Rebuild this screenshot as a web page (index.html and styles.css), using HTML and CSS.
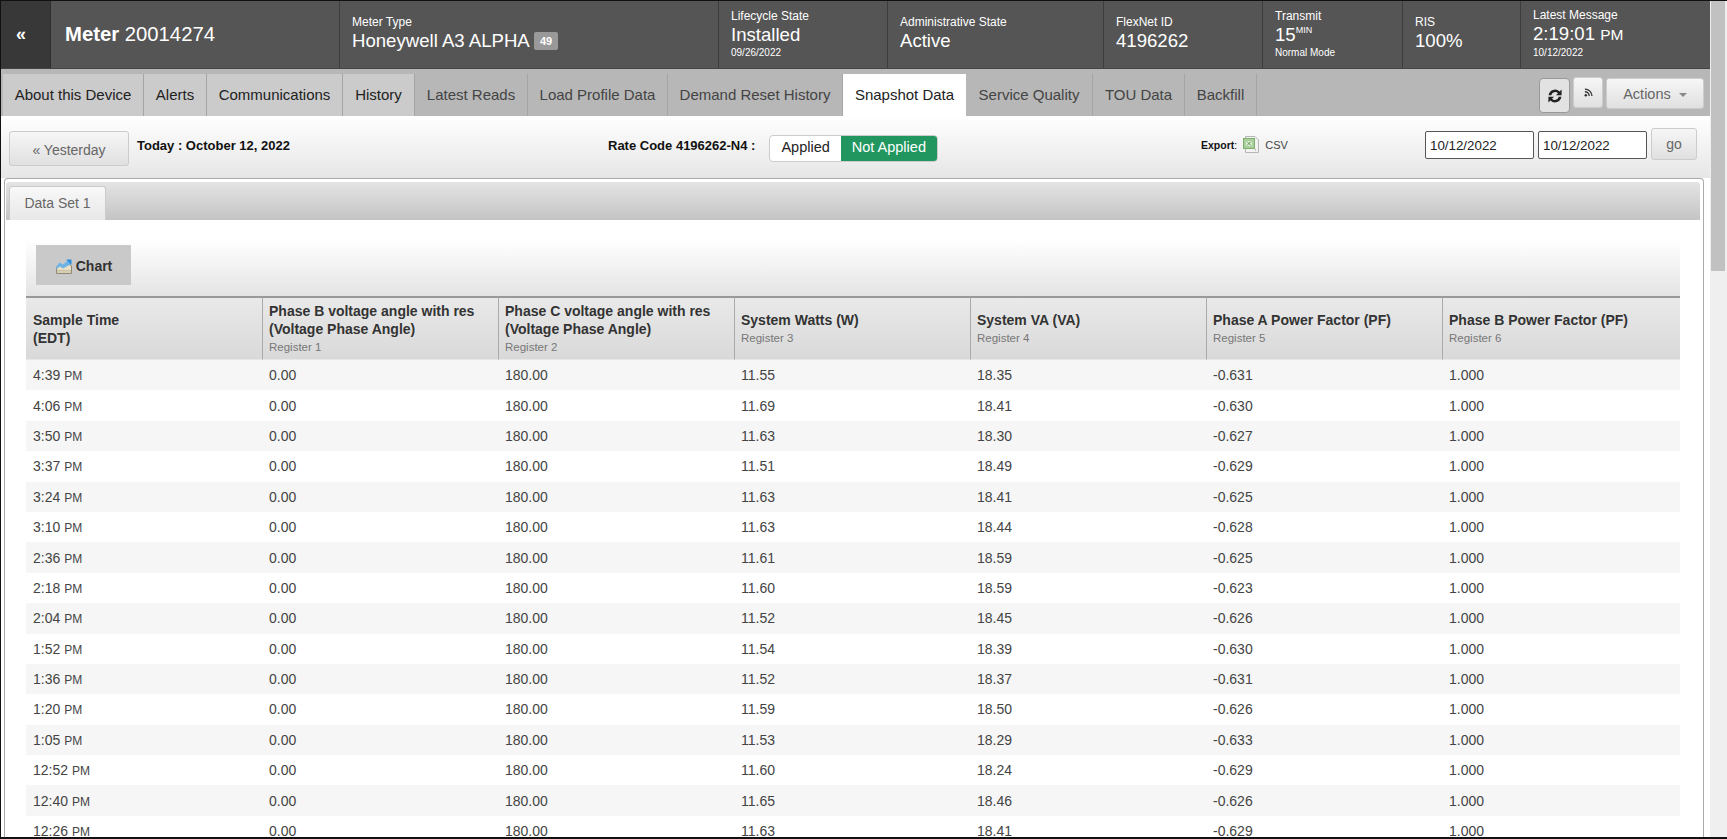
FILE: index.html
```html
<!DOCTYPE html>
<html lang="en">
<head>
    <meta charset="UTF-8">
    <meta name="viewport" content="width=device-width, initial-scale=1.0">
    <title>Meter 20014274 - Snapshot Data</title>
    <link rel="stylesheet" href="styles.css">
</head>
<body>
    <div class="window">
        <div class="page">
            <header class="meter-bar">
                <a class="collapse">«</a>
                <div class="meter-name"><b>Meter</b> 20014274</div>
                <div class="stat stat-short stat-type"><span class="stat-label">Meter Type</span><span class="stat-value">Honeywell A3 ALPHA <em class="badge">49</em></span></div>
                <div class="stat stat-life"><span class="stat-label">Lifecycle State</span><span class="stat-value">Installed</span><span class="stat-note">09/26/2022</span></div>
                <div class="stat stat-short stat-admin"><span class="stat-label">Administrative State</span><span class="stat-value">Active</span></div>
                <div class="stat stat-short stat-flex"><span class="stat-label">FlexNet ID</span><span class="stat-value">4196262</span></div>
                <div class="stat stat-transmit"><span class="stat-label">Transmit</span><span class="stat-value">15<sup>MIN</sup></span><span class="stat-note">Normal Mode</span></div>
                <div class="stat stat-short stat-ris"><span class="stat-label">RIS</span><span class="stat-value">100%</span></div>
                <div class="stat stat-latest"><span class="stat-label">Latest Message</span><span class="stat-value">2:19:01 <small>PM</small></span><span class="stat-note">10/12/2022</span></div>
            </header>

            <nav class="tabs">
                <a class="tab tab-light w141">About this Device</a>
                <a class="tab tab-light w63">Alerts</a>
                <a class="tab tab-light w136">Communications</a>
                <a class="tab tab-light w72">History</a>
                <a class="tab w113">Latest Reads</a>
                <a class="tab w140">Load Profile Data</a>
                <a class="tab w175">Demand Reset History</a>
                <a class="tab tab-active w123">Snapshot Data</a>
                <a class="tab w127">Service Quality</a>
                <a class="tab w92">TOU Data</a>
                <a class="tab w72">Backfill</a>
                <div class="tab-actions">
                    <button class="icon-btn refresh-btn">
                        <svg width="16" height="16" viewBox="0 0 16 16"><path d="M1.6 7.2A6.5 6.5 0 0 1 12.6 3.4L14.6 1.6V7.2H9L11 5.2A4 4 0 0 0 4.3 7.2Z" fill="#222"/><path d="M14.4 8.8A6.5 6.5 0 0 1 3.4 12.6L1.4 14.4V8.8H7L5 10.8A4 4 0 0 0 11.7 8.8Z" fill="#222"/></svg>
                    </button>
                    <button class="icon-btn rss-btn">
                        <svg width="9" height="9" viewBox="0 0 10 10"><circle cx="2" cy="8" r="1.4" fill="#333"/><path d="M1 4.2A4.8 4.8 0 0 1 5.8 9M1 1.2A7.8 7.8 0 0 1 8.8 9" fill="none" stroke="#333" stroke-width="1.5"/></svg>
                    </button>
                    <button class="actions-btn">Actions <i class="caret"></i></button>
                </div>
            </nav>

            <section class="toolbar">
                <button class="day-btn">« Yesterday</button>
                <div class="today">Today : October 12, 2022</div>
                <div class="rate">
                    <span class="rate-label">Rate Code 4196262-N4 :</span>
                    <div class="toggle"><span class="toggle-off">Applied</span><span class="toggle-on">Not Applied</span></div>
                </div>
                <div class="export">
                    <span><b>Export</b>:</span>
                    <svg width="16" height="17" viewBox="0 0 16 17"><path d="M2.5 .5H12L15.5 4V16.5H2.5Z" fill="#f3f3f3" stroke="#b5b5b5"/><rect x=".5" y="2.5" width="11" height="10" fill="#a9d09c" stroke="#7dae6d"/><rect x="3" y="5" width="6" height="5" fill="#dcecd6"/><path d="M4 5.5L8 9.5M8 5.5L4 9.5" stroke="#5f9a4c"/><path d="M12.5 13.5V14.5" stroke="#888"/></svg>
                    <a>CSV</a>
                </div>
                <div class="dates">
                    <input class="date-input" value="10/12/2022">
                    <input class="date-input" value="10/12/2022">
                    <button class="go-btn">go</button>
                </div>
            </section>

            <section class="panel">
                <div class="panel-tabs"><a class="panel-tab">Data Set 1</a></div>
                <div class="panel-body">
                    <div class="chart-bar">
                        <button class="chart-btn">
                            <svg width="16" height="15" viewBox="0 0 16 15"><path d="M.5 8.5L4 6L7 8L11 4L15.5 7V14.5H.5Z" fill="#e8dfc6" stroke="#8f8a76"/><path d="M1 11.5H15M1 13H15" stroke="#c9bfa3"/><path d="M.5 7L4 3.5L7 5.5L12 1.5L15 5L7 9.5L4 7.5L.5 10Z" fill="#6fb2e6"/><path d="M10 .5H15.5V6Z" fill="#2f8fdc"/></svg>
                            Chart
                        </button>
                    </div>
                    <table class="data-table">
                        <thead>
                            <tr>
                                <th>Sample Time<br>(EDT)</th>
                                <th>Phase B voltage angle with res<br>(Voltage Phase Angle)<span class="reg">Register 1</span></th>
                                <th>Phase C voltage angle with res<br>(Voltage Phase Angle)<span class="reg">Register 2</span></th>
                                <th>System Watts (W)<span class="reg">Register 3</span></th>
                                <th>System VA (VA)<span class="reg">Register 4</span></th>
                                <th>Phase A Power Factor (PF)<span class="reg">Register 5</span></th>
                                <th class="col-last">Phase B Power Factor (PF)<span class="reg">Register 6</span></th>
                            </tr>
                        </thead>
                        <tbody>
                            <tr><td>4:39 <small>PM</small></td><td>0.00</td><td>180.00</td><td>11.55</td><td>18.35</td><td>-0.631</td><td>1.000</td></tr>
                            <tr><td>4:06 <small>PM</small></td><td>0.00</td><td>180.00</td><td>11.69</td><td>18.41</td><td>-0.630</td><td>1.000</td></tr>
                            <tr><td>3:50 <small>PM</small></td><td>0.00</td><td>180.00</td><td>11.63</td><td>18.30</td><td>-0.627</td><td>1.000</td></tr>
                            <tr><td>3:37 <small>PM</small></td><td>0.00</td><td>180.00</td><td>11.51</td><td>18.49</td><td>-0.629</td><td>1.000</td></tr>
                            <tr><td>3:24 <small>PM</small></td><td>0.00</td><td>180.00</td><td>11.63</td><td>18.41</td><td>-0.625</td><td>1.000</td></tr>
                            <tr><td>3:10 <small>PM</small></td><td>0.00</td><td>180.00</td><td>11.63</td><td>18.44</td><td>-0.628</td><td>1.000</td></tr>
                            <tr><td>2:36 <small>PM</small></td><td>0.00</td><td>180.00</td><td>11.61</td><td>18.59</td><td>-0.625</td><td>1.000</td></tr>
                            <tr><td>2:18 <small>PM</small></td><td>0.00</td><td>180.00</td><td>11.60</td><td>18.59</td><td>-0.623</td><td>1.000</td></tr>
                            <tr><td>2:04 <small>PM</small></td><td>0.00</td><td>180.00</td><td>11.52</td><td>18.45</td><td>-0.626</td><td>1.000</td></tr>
                            <tr><td>1:52 <small>PM</small></td><td>0.00</td><td>180.00</td><td>11.54</td><td>18.39</td><td>-0.630</td><td>1.000</td></tr>
                            <tr><td>1:36 <small>PM</small></td><td>0.00</td><td>180.00</td><td>11.52</td><td>18.37</td><td>-0.631</td><td>1.000</td></tr>
                            <tr><td>1:20 <small>PM</small></td><td>0.00</td><td>180.00</td><td>11.59</td><td>18.50</td><td>-0.626</td><td>1.000</td></tr>
                            <tr><td>1:05 <small>PM</small></td><td>0.00</td><td>180.00</td><td>11.53</td><td>18.29</td><td>-0.633</td><td>1.000</td></tr>
                            <tr><td>12:52 <small>PM</small></td><td>0.00</td><td>180.00</td><td>11.60</td><td>18.24</td><td>-0.629</td><td>1.000</td></tr>
                            <tr><td>12:40 <small>PM</small></td><td>0.00</td><td>180.00</td><td>11.65</td><td>18.46</td><td>-0.626</td><td>1.000</td></tr>
                            <tr><td>12:26 <small>PM</small></td><td>0.00</td><td>180.00</td><td>11.63</td><td>18.41</td><td>-0.629</td><td>1.000</td></tr>
                        </tbody>
                    </table>
                </div>
            </section>
        </div>
        <div class="scrollbar"><div class="scroll-thumb"></div></div>
    </div>
</body>
</html>
```

FILE: styles.css
```css
html, body {
    height: 100%;
    margin: 0;
    overflow: hidden;
}
body {
    font-family: "Liberation Sans", Arial, sans-serif;
    font-size: 14px;
    color: #333;
    background: #fff;
}
button, input {
    font-family: inherit;
}
.window {
    display: flex;
    height: 839px;
    box-sizing: border-box;
    border: 1px solid #111;
    border-right: 0;
    border-bottom-width: 2px;
    overflow: hidden;
}
.page {
    width: 1709px;
    flex: none;
    overflow: hidden;
}
.scrollbar {
    flex: 1;
    background: #efefef;
}
.scroll-thumb {
    height: 270px;
    margin: 0 2px 0 1px;
    background: #c1c1c1;
}

/* header */
.meter-bar {
    display: flex;
    height: 67px;
    background: #555;
    color: #fff;
    border-bottom: 1px solid #444;
}
.collapse {
    width: 50px;
    flex: none;
    box-sizing: border-box;
    background: #383838;
    border-right: 1px solid #2e2e2e;
    font-size: 18px;
    font-weight: bold;
    line-height: 66px;
    padding-left: 15px;
}
.meter-name {
    width: 289px;
    flex: none;
    box-sizing: border-box;
    padding-left: 14px;
    font-size: 20.3px;
    line-height: 66px;
    border-right: 1px solid #3d3d3d;
}
.stat {
    display: flex;
    flex-direction: column;
    justify-content: center;
    flex: none;
    box-sizing: border-box;
    padding: 0 0 1px 12px;
    border-right: 1px solid #3d3d3d;
}
.stat-short {
    padding-bottom: 2px;
}
.stat-type { width: 379px; }
.stat-life { width: 169px; }
.stat-admin { width: 216px; }
.stat-flex { width: 159px; }
.stat-transmit { width: 140px; }
.stat-ris { width: 118px; }
.stat-latest { flex: 1; border-right: 0; }
.stat-label {
    font-size: 12px;
    line-height: 15px;
}
.stat-value {
    font-size: 18.6px;
    line-height: 22px;
}
.stat-value small {
    font-size: 15.5px;
}
.stat-value sup {
    font-size: 9px;
    vertical-align: 8px;
    line-height: 0;
}
.stat-note {
    font-size: 10px;
    line-height: 14px;
}
.badge {
    display: inline-block;
    font-style: normal;
    font-size: 11px;
    font-weight: bold;
    line-height: 18px;
    padding: 0 6px;
    background: #999;
    border-radius: 2px;
    vertical-align: 2px;
}

/* tabs */
.tabs {
    display: flex;
    height: 47px;
    box-sizing: border-box;
    padding: 5px 0 0 2px;
    background: #b7b7b7;
}
.tab {
    box-sizing: border-box;
    height: 42px;
    font-size: 15px;
    line-height: 42px;
    text-align: center;
    color: #444;
    border-right: 1px solid #a5a5a5;
}
.tab-light {
    background: #cbcbcb;
    color: #222;
}
.tab-active {
    background: #fff;
    color: #222;
    border-right: 0;
}
.w141 { width: 141px; }
.w140 { width: 140px; }
.w63 { width: 63px; }
.w136 { width: 136px; }
.w72 { width: 72px; }
.w113 { width: 113px; }
.w175 { width: 175px; }
.w123 { width: 123px; }
.w127 { width: 127px; }
.w92 { width: 92px; }
.tab-actions {
    display: flex;
    gap: 3px;
    margin-left: auto;
    padding: 3px 6px 0 0;
    align-items: flex-start;
}
.icon-btn, .actions-btn, .day-btn, .go-btn {
    border: 1px solid #ccc;
    border-radius: 3px;
    background: linear-gradient(#f6f6f6, #e0e0e0);
    color: #666;
    padding: 0;
}
.icon-btn {
    display: flex;
    align-items: center;
    justify-content: center;
}
.refresh-btn {
    width: 31px;
    height: 35px;
    margin-top: 1px;
    border-color: #999;
    border-radius: 4px;
    background: #e2e2e2;
}
.rss-btn {
    width: 30px;
    height: 31px;
}
.actions-btn {
    width: 98px;
    height: 31px;
    margin-top: 1px;
    font-size: 14.5px;
}
.caret {
    display: inline-block;
    width: 0;
    height: 0;
    margin: 0 0 2px 4px;
    border-top: 4px solid #888;
    border-left: 4px solid transparent;
    border-right: 4px solid transparent;
}

/* toolbar under the tabs */
.toolbar {
    display: flex;
    align-items: flex-start;
    height: 62px;
    box-sizing: border-box;
    padding: 15px 13px 0 8px;
    background: linear-gradient(#fff, #e6e6e6);
}
.day-btn {
    width: 120px;
    height: 35px;
    padding-top: 2px;
    font-size: 14px;
    flex: none;
}
.today {
    width: 295px;
    flex: none;
    margin: 7px 0 0 8px;
    font-size: 13px;
    font-weight: bold;
    color: #111;
}
.rate {
    display: flex;
    align-items: flex-start;
    width: 593px;
    flex: none;
    margin-left: 176px;
}
.rate-label {
    margin: 7px 14px 0 0;
    font-size: 13px;
    font-weight: bold;
    color: #111;
}
.toggle {
    display: flex;
    height: 25px;
    margin-top: 4px;
    font-size: 14.5px;
    line-height: 23px;
    border: 1px solid #ccc;
    border-radius: 4px;
    overflow: hidden;
    background: #fff;
}
.toggle-off {
    padding: 0 11px;
    color: #222;
}
.toggle-on {
    padding: 0 11px;
    color: #fff;
    background: #21975f;
}
.export {
    display: flex;
    align-items: center;
    gap: 6px;
    flex: none;
    margin-top: 5px;
    font-size: 10.5px;
    color: #111;
}
.export a {
    color: #444;
    font-size: 11px;
}
.dates {
    display: flex;
    align-items: flex-start;
    gap: 4px;
    margin-left: auto;
}
.date-input {
    width: 109px;
    height: 28px;
    box-sizing: border-box;
    padding: 0 4px;
    font-size: 13.33px;
    color: #222;
    border: 1px solid #555;
    border-radius: 2px;
    background: #fff;
}
.go-btn {
    width: 46px;
    height: 32px;
    margin-top: -3px;
    font-size: 14px;
}

/* data panel */
.panel {
    margin-left: 3px;
    margin-right: 6px;
    border: 1px solid #aaa;
    border-bottom: 0;
    border-radius: 4px 4px 0 0;
    background: #fff;
}
.panel-tabs {
    height: 38px;
    margin: 3px 3px 0 1px;
    padding: 4px 0 0 3px;
    box-sizing: border-box;
    background: linear-gradient(#e4e4e4, #c4c4c4);
    border-radius: 3px 3px 0 0;
}
.panel-tab {
    display: block;
    width: 97px;
    height: 34px;
    box-sizing: border-box;
    text-align: center;
    line-height: 32px;
    color: #666;
    background: linear-gradient(#f8f8f8, #e8e8e8);
    border: 1px solid #ccc;
    border-bottom: 0;
    border-radius: 3px 3px 0 0;
}
.panel-body {
    padding: 20px 23px 0 21px;
}
.chart-bar {
    height: 56px;
    box-sizing: border-box;
    padding: 5px 0 0 10px;
    background: linear-gradient(#fff, #e4e4e4);
}
.chart-btn {
    display: flex;
    align-items: center;
    justify-content: center;
    gap: 4px;
    width: 95px;
    height: 40px;
    padding: 2px 0 0 1px;
    border: 0;
    background: #c9c9c9;
    color: #333;
    font-size: 14px;
    font-weight: bold;
}
.data-table {
    width: 100%;
    border-collapse: separate;
    border-spacing: 0;
    table-layout: fixed;
}
.data-table th {
    height: 64px;
    padding: 0 6px;
    box-sizing: border-box;
    text-align: left;
    font-size: 14px;
    line-height: 18px;
    font-weight: bold;
    color: #333;
    background: linear-gradient(#e9e9e9, #d9d9d9);
    border-top: 2px solid #999;
    border-bottom: 1px solid #e6e6e6;
    border-left: 1px solid #aaa;
}
.data-table th:first-child {
    padding-left: 7px;
    border-left: 0;
}
.data-table th.col-last {
    width: 238px;
}
.reg {
    display: block;
    font-size: 11.5px;
    font-weight: normal;
    color: #777;
}
.data-table td {
    height: 30.4px;
    padding: 0 7px;
    box-sizing: border-box;
    font-size: 14px;
    color: #444;
}
.data-table td small {
    font-size: 12px;
}
.data-table tbody tr:nth-child(odd) {
    background: #f6f6f6;
}
```
